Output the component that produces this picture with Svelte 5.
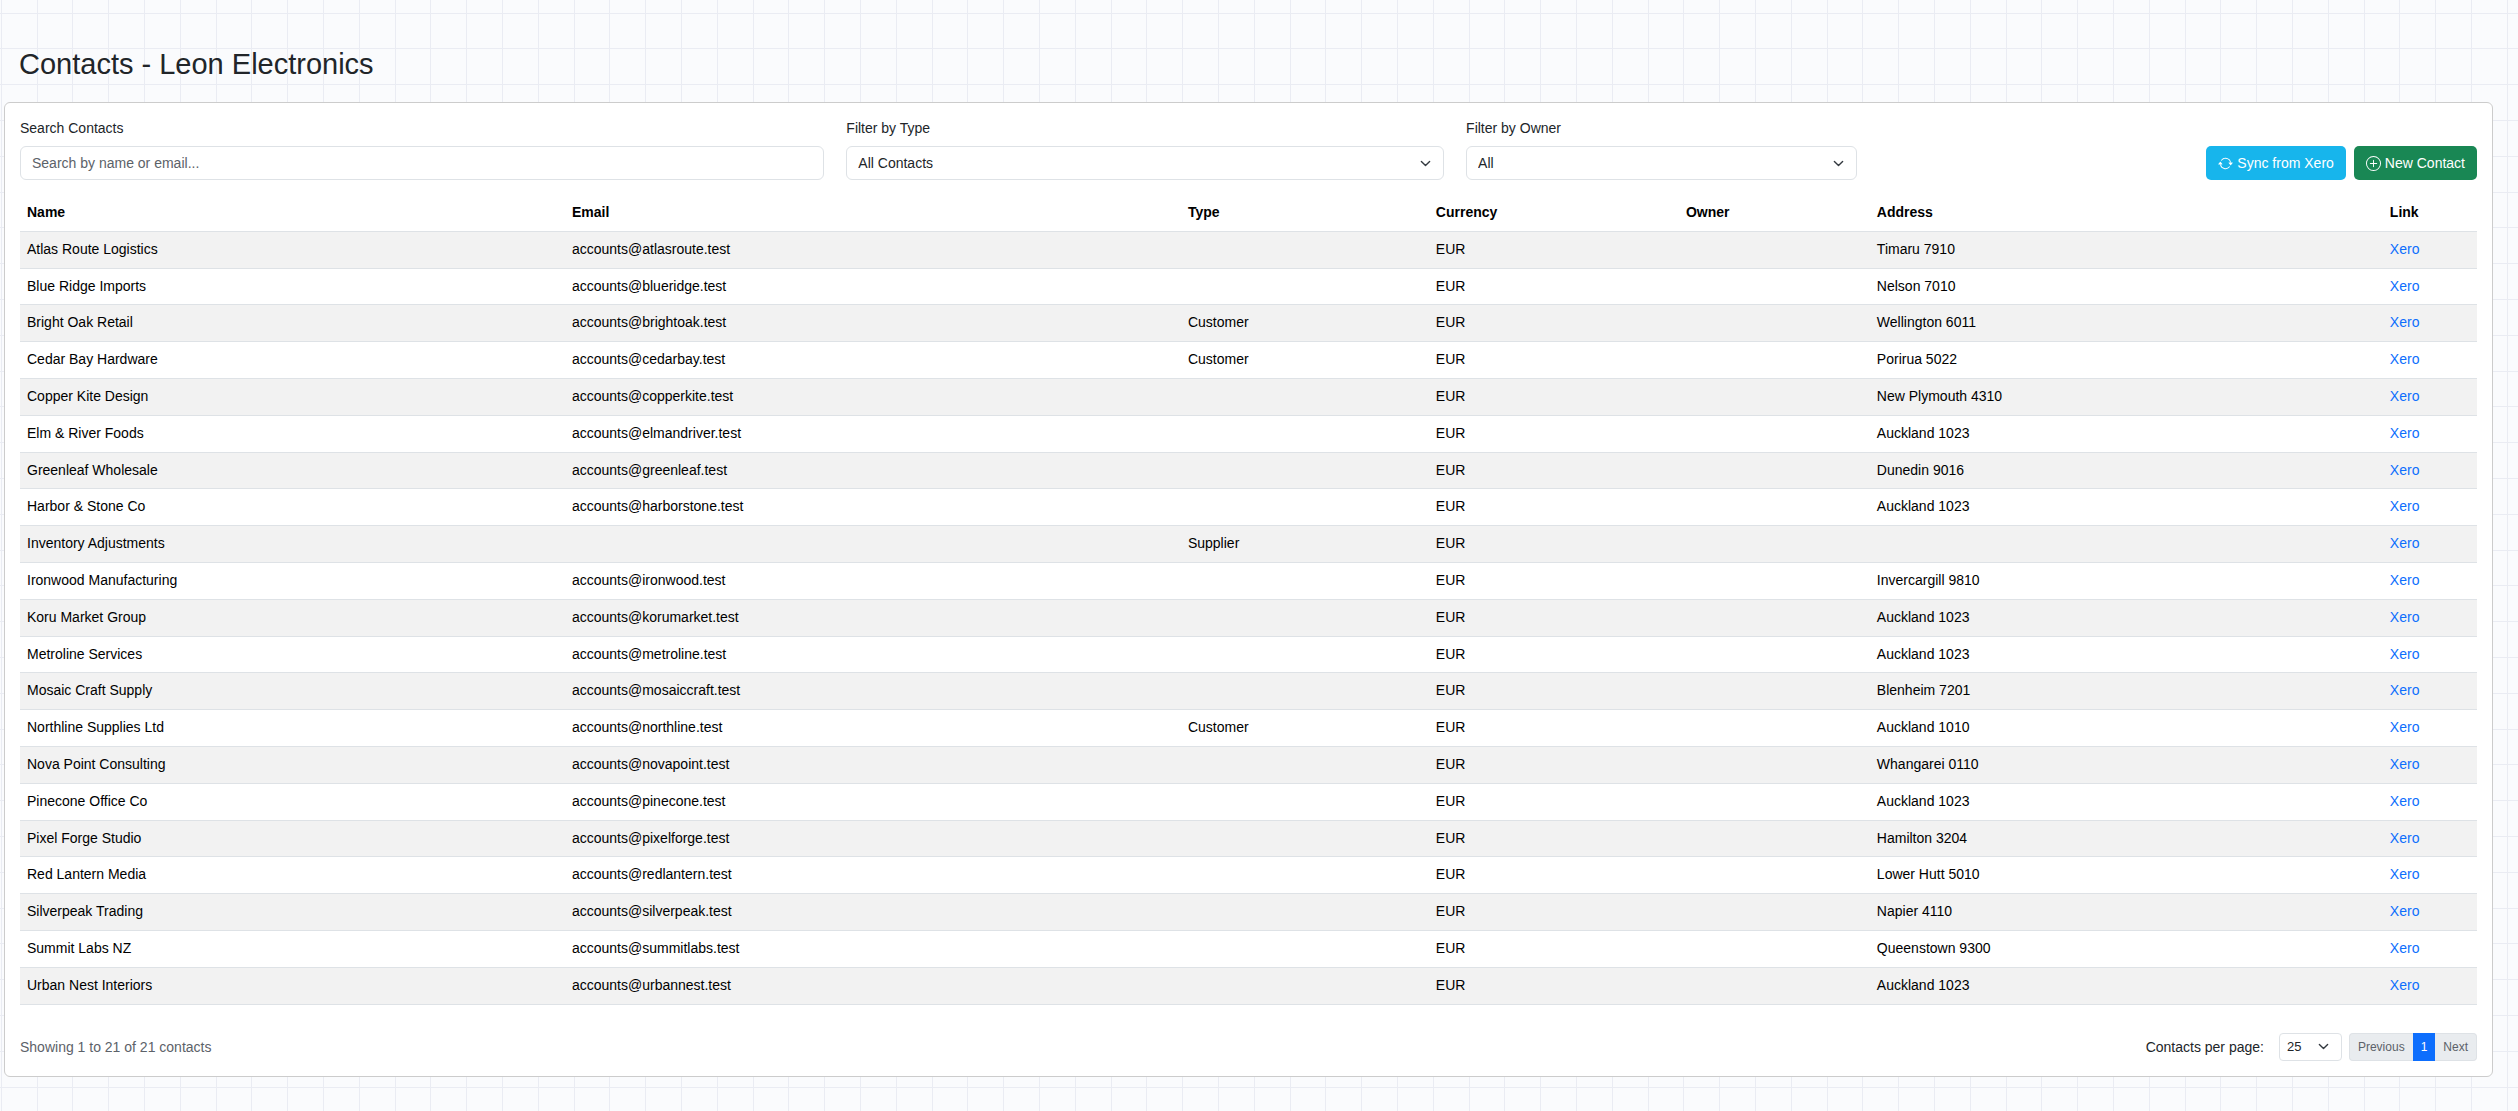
<script lang="ts">
  type Contact = { name: string; email: string; type: string; currency: string; owner: string; address: string };

  const rows: [string, string, string, string][] = [
    ['Atlas Route Logistics', 'accounts@atlasroute.test', '', 'Timaru 7910'],
    ['Blue Ridge Imports', 'accounts@blueridge.test', '', 'Nelson 7010'],
    ['Bright Oak Retail', 'accounts@brightoak.test', 'Customer', 'Wellington 6011'],
    ['Cedar Bay Hardware', 'accounts@cedarbay.test', 'Customer', 'Porirua 5022'],
    ['Copper Kite Design', 'accounts@copperkite.test', '', 'New Plymouth 4310'],
    ['Elm & River Foods', 'accounts@elmandriver.test', '', 'Auckland 1023'],
    ['Greenleaf Wholesale', 'accounts@greenleaf.test', '', 'Dunedin 9016'],
    ['Harbor & Stone Co', 'accounts@harborstone.test', '', 'Auckland 1023'],
    ['Inventory Adjustments', '', 'Supplier', ''],
    ['Ironwood Manufacturing', 'accounts@ironwood.test', '', 'Invercargill 9810'],
    ['Koru Market Group', 'accounts@korumarket.test', '', 'Auckland 1023'],
    ['Metroline Services', 'accounts@metroline.test', '', 'Auckland 1023'],
    ['Mosaic Craft Supply', 'accounts@mosaiccraft.test', '', 'Blenheim 7201'],
    ['Northline Supplies Ltd', 'accounts@northline.test', 'Customer', 'Auckland 1010'],
    ['Nova Point Consulting', 'accounts@novapoint.test', '', 'Whangarei 0110'],
    ['Pinecone Office Co', 'accounts@pinecone.test', '', 'Auckland 1023'],
    ['Pixel Forge Studio', 'accounts@pixelforge.test', '', 'Hamilton 3204'],
    ['Red Lantern Media', 'accounts@redlantern.test', '', 'Lower Hutt 5010'],
    ['Silverpeak Trading', 'accounts@silverpeak.test', '', 'Napier 4110'],
    ['Summit Labs NZ', 'accounts@summitlabs.test', '', 'Queenstown 9300'],
    ['Urban Nest Interiors', 'accounts@urbannest.test', '', 'Auckland 1023']
  ];

  const contacts: Contact[] = rows.map(([name, email, type, address]) => ({
    name, email, type, currency: 'EUR', owner: '', address
  }));

  let search = $state('');
  let typeFilter = $state('');
  let ownerFilter = $state('');
  let perPage = $state('25');

  const visible = $derived(
    contacts.filter((c) => {
      const term = search.trim().toLowerCase();
      const hit = !term || c.name.toLowerCase().includes(term) || c.email.includes(term);
      return hit && (!typeFilter || c.type === typeFilter);
    })
  );
</script>

{#snippet chevron()}
  <svg class="chevron" viewBox="0 0 16 16" aria-hidden="true">
    <path d="m2 5 6 6 6-6" fill="none" stroke="#343a40" stroke-width="2" stroke-linecap="round" stroke-linejoin="round" />
  </svg>
{/snippet}

<main>
  <h1>Contacts - Leon Electronics</h1>

  <section class="card">
    <div class="filters">
      <div class="field wide">
        <label for="search">Search Contacts</label>
        <input id="search" type="text" placeholder="Search by name or email..." bind:value={search} />
      </div>
      <div class="field medium">
        <label for="type">Filter by Type</label>
        <div class="select">
          <select id="type" bind:value={typeFilter}>
            <option value="">All Contacts</option>
            <option>Customer</option>
            <option>Supplier</option>
          </select>
          {@render chevron()}
        </div>
      </div>
      <div class="field narrow">
        <label for="owner">Filter by Owner</label>
        <div class="select">
          <select id="owner" bind:value={ownerFilter}>
            <option value="">All</option>
          </select>
          {@render chevron()}
        </div>
      </div>
      <div class="actions">
        <button class="btn sync" type="button">
          <svg viewBox="0 0 16 16" fill="currentColor" aria-hidden="true">
            <path d="M11.534 7h3.932a.25.25 0 0 1 .192.41l-1.966 2.36a.25.25 0 0 1-.384 0l-1.966-2.36a.25.25 0 0 1 .192-.41m-11 2h3.932a.25.25 0 0 0 .192-.41L2.692 6.23a.25.25 0 0 0-.384 0L.342 8.59A.25.25 0 0 0 .534 9" />
            <path d="M8 3c-1.552 0-2.94.707-3.857 1.818a.5.5 0 1 1-.771-.636A6.002 6.002 0 0 1 13.917 7H12.9A5 5 0 0 0 8 3M3.1 9a5.002 5.002 0 0 0 8.757 2.182.5.5 0 1 1 .771.636A6.002 6.002 0 0 1 2.083 9z" />
          </svg>
          Sync from Xero
        </button>
        <button class="btn new" type="button">
          <svg viewBox="0 0 16 16" fill="currentColor" aria-hidden="true">
            <path d="M8 15A7 7 0 1 1 8 1a7 7 0 0 1 0 14m0 1A8 8 0 1 0 8 0a8 8 0 0 0 0 16" />
            <path d="M8 4a.5.5 0 0 1 .5.5v3h3a.5.5 0 0 1 0 1h-3v3a.5.5 0 0 1-1 0v-3h-3a.5.5 0 0 1 0-1h3v-3A.5.5 0 0 1 8 4" />
          </svg>
          New Contact
        </button>
      </div>
    </div>

    <table>
      <colgroup>
        <col class="c-name" /><col class="c-email" /><col class="c-type" /><col class="c-currency" />
        <col class="c-owner" /><col class="c-address" /><col />
      </colgroup>
      <thead>
        <tr>
          <th scope="col">Name</th>
          <th scope="col">Email</th>
          <th scope="col">Type</th>
          <th scope="col">Currency</th>
          <th scope="col">Owner</th>
          <th scope="col">Address</th>
          <th scope="col">Link</th>
        </tr>
      </thead>
      <tbody>
        {#each visible as contact (contact.name)}
          <tr>
            <td>{contact.name}</td>
            <td>{contact.email}</td>
            <td>{contact.type}</td>
            <td>{contact.currency}</td>
            <td>{contact.owner}</td>
            <td>{contact.address}</td>
            <td><a href="#xero">Xero</a></td>
          </tr>
        {/each}
      </tbody>
    </table>

    <footer>
      <span class="summary">Showing 1 to {visible.length} of {contacts.length} contacts</span>
      <div class="paging">
        <label for="per-page">Contacts per page:</label>
        <div class="select small">
          <select id="per-page" bind:value={perPage}>
            <option>25</option>
            <option>50</option>
            <option>100</option>
          </select>
          {@render chevron()}
        </div>
        <nav class="pages" aria-label="Pages">
          <button type="button" disabled>Previous</button>
          <button type="button" class="current" aria-current="page">1</button>
          <button type="button" disabled>Next</button>
        </nav>
      </div>
    </footer>
  </section>
</main>

<style>
  :global(body) {
    margin: 0;
    min-height: 100vh;
    background-color: #fafbfd;
    /* Graph-paper grid: five cells to each 179px tile. */
    background-image:
      linear-gradient(90deg, #eaecf3 1px, transparent 1px 36px, #eaecf3 36px 37px, transparent 37px 71px, #eaecf3 71px 72px, transparent 72px 107px, #eaecf3 107px 108px, transparent 108px 143px, #eaecf3 143px 144px, transparent 144px),
      linear-gradient(#eaecf3 1px, transparent 1px 35px, #eaecf3 35px 36px, transparent 36px 71px, #eaecf3 71px 72px, transparent 72px 107px, #eaecf3 107px 108px, transparent 108px 143px, #eaecf3 143px 144px, transparent 144px);
    background-size: 179px 179px;
    background-position: 1px 13px;
  }

  main {
    box-sizing: border-box;
    padding: 46px 25px 33px 4px;
    font-family: 'Liberation Sans', Arial, sans-serif;
    font-size: 14px;
    line-height: 22px;
    color: #212529;
  }

  h1 {
    margin: 0 0 20px 15px;
    font-size: 29px;
    font-weight: 400;
    line-height: 36px;
  }

  .card {
    padding: 14px 15px 15px;
    background: #fff;
    border: 1px solid #ccc;
    border-radius: 6px;
  }

  .filters {
    display: grid;
    grid-template-columns: repeat(12, minmax(0, 1fr));
    column-gap: 22px;
    align-items: end;
  }

  .field {
    display: flex;
    flex-direction: column;
    gap: 7px;
  }

  .wide {
    grid-column: span 4;
  }

  .medium,
  .actions {
    grid-column: span 3;
  }

  .narrow {
    grid-column: span 2;
  }

  input,
  select,
  button {
    box-sizing: border-box;
    margin: 0;
    font: inherit;
    color: inherit;
  }

  input,
  select {
    width: 100%;
    height: 34px;
    padding: 0 11px;
    background: #fff;
    border: 1px solid #dee2e6;
    border-radius: 6px;
  }

  select {
    appearance: none;
    padding-right: 32px;
  }

  input::placeholder {
    color: #5c6269;
    opacity: 1;
  }

  .select {
    display: grid;
    align-items: center;
  }

  .select > :global(*) {
    grid-area: 1 / 1;
  }

  .chevron {
    justify-self: end;
    width: 11px;
    height: 11px;
    margin-right: 13px;
    pointer-events: none;
  }

  .actions {
    display: flex;
    justify-content: flex-end;
    gap: 8px;
  }

  .btn {
    display: flex;
    align-items: center;
    gap: 4px;
    height: 34px;
    padding: 0 12px;
    border: 0;
    border-radius: 5px;
    color: #fff;
    white-space: nowrap;
  }

  .btn svg {
    width: 15px;
    height: 15px;
  }

  .sync {
    background: #17b5ec;
  }

  .new {
    background: #198754;
  }

  table {
    width: 100%;
    margin-top: 15px;
    border-collapse: separate;
    border-spacing: 0;
    table-layout: fixed;
    color: #000;
    line-height: 1.7;
  }

  .c-name { width: 22.18%; }
  .c-email { width: 25.07%; }
  .c-type { width: 10.09%; }
  .c-currency { width: 10.18%; }
  .c-owner { width: 7.77%; }
  .c-address { width: 20.88%; }

  th,
  td {
    padding: 6px 7px;
    border-bottom: 1px solid #dee2e6;
    text-align: left;
  }

  tbody tr:nth-child(odd) {
    background: #f2f2f2;
  }

  a {
    color: #0d6efd;
    text-decoration: none;
  }

  footer {
    display: flex;
    justify-content: space-between;
    align-items: center;
    margin-top: 28px;
  }

  .summary {
    color: #5c6269;
  }

  .paging {
    display: flex;
    align-items: center;
  }

  .small {
    width: 63px;
    margin: 0 7px 0 15px;
    font-size: 13px;
  }

  .small select {
    height: 28px;
    padding: 0 24px 0 7px;
    border-radius: 4px;
  }

  .pages {
    display: flex;
    font-size: 12px;
  }

  .pages button {
    height: 28px;
    padding: 0 8px;
    background: #e9ecef;
    border: 1px solid #dee2e6;
    color: #5c6269;
  }

  .pages button:first-child {
    border-right: 0;
    border-radius: 4px 0 0 4px;
  }

  .pages button:last-child {
    border-left: 0;
    border-radius: 0 4px 4px 0;
  }

  .pages .current {
    background: #0d6efd;
    border-width: 0;
    color: #fff;
  }
</style>
